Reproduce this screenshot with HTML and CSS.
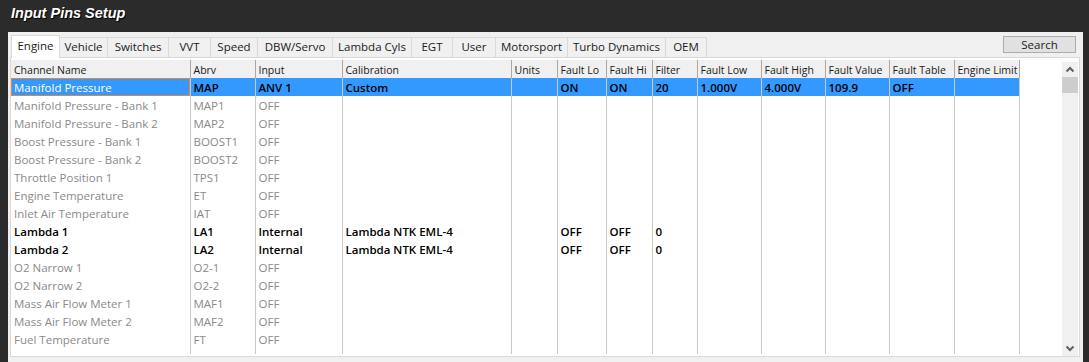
FILE: index.html
```html
<!DOCTYPE html>
<html>
<head>
<meta charset="utf-8">
<title>Input Pins Setup</title>
<link rel="stylesheet" href="styles.css">
</head>
<body>
<div class="window">
  <div class="titlebar"><span class="title">Input Pins Setup</span></div>
  <div class="panel">
    <div class="tabrow">
      <div class="tabs">
        <div class="tab active">Engine</div>
        <div class="tab">Vehicle</div>
        <div class="tab">Switches</div>
        <div class="tab">VVT</div>
        <div class="tab">Speed</div>
        <div class="tab">DBW/Servo</div>
        <div class="tab">Lambda Cyls</div>
        <div class="tab">EGT</div>
        <div class="tab">User</div>
        <div class="tab">Motorsport</div>
        <div class="tab">Turbo Dynamics</div>
        <div class="tab">OEM</div>
      </div>
      <button class="search">Search</button>
    </div>
    <div class="page">
      <div class="grid">
        <table>
          <colgroup>
            <col class="c-name"><col class="c-abrv"><col class="c-input"><col class="c-cal"><col class="c-units"><col class="c-flo"><col class="c-fhi"><col class="c-filter"><col class="c-flow"><col class="c-fhigh"><col class="c-fval"><col class="c-ftab"><col class="c-elim">
          </colgroup>
          <thead>
            <tr><th>Channel Name</th><th>Abrv</th><th>Input</th><th>Calibration</th><th>Units</th><th>Fault Lo</th><th>Fault Hi</th><th>Filter</th><th>Fault Low</th><th>Fault High</th><th>Fault Value</th><th>Fault Table</th><th>Engine Limit</th></tr>
          </thead>
          <tbody>
            <tr class="sel on"><td class="focus">Manifold Pressure</td><td>MAP</td><td>ANV 1</td><td>Custom</td><td></td><td>ON</td><td>ON</td><td>20</td><td>1.000V</td><td>4.000V</td><td>109.9</td><td>OFF</td><td></td></tr>
            <tr class="off"><td>Manifold Pressure - Bank 1</td><td>MAP1</td><td>OFF</td><td></td><td></td><td></td><td></td><td></td><td></td><td></td><td></td><td></td><td></td></tr>
            <tr class="off"><td>Manifold Pressure - Bank 2</td><td>MAP2</td><td>OFF</td><td></td><td></td><td></td><td></td><td></td><td></td><td></td><td></td><td></td><td></td></tr>
            <tr class="off"><td>Boost Pressure - Bank 1</td><td>BOOST1</td><td>OFF</td><td></td><td></td><td></td><td></td><td></td><td></td><td></td><td></td><td></td><td></td></tr>
            <tr class="off"><td>Boost Pressure - Bank 2</td><td>BOOST2</td><td>OFF</td><td></td><td></td><td></td><td></td><td></td><td></td><td></td><td></td><td></td><td></td></tr>
            <tr class="off"><td>Throttle Position 1</td><td>TPS1</td><td>OFF</td><td></td><td></td><td></td><td></td><td></td><td></td><td></td><td></td><td></td><td></td></tr>
            <tr class="off"><td>Engine Temperature</td><td>ET</td><td>OFF</td><td></td><td></td><td></td><td></td><td></td><td></td><td></td><td></td><td></td><td></td></tr>
            <tr class="off"><td>Inlet Air Temperature</td><td>IAT</td><td>OFF</td><td></td><td></td><td></td><td></td><td></td><td></td><td></td><td></td><td></td><td></td></tr>
            <tr class="on"><td>Lambda 1</td><td>LA1</td><td>Internal</td><td>Lambda NTK EML-4</td><td></td><td>OFF</td><td>OFF</td><td>0</td><td></td><td></td><td></td><td></td><td></td></tr>
            <tr class="on"><td>Lambda 2</td><td>LA2</td><td>Internal</td><td>Lambda NTK EML-4</td><td></td><td>OFF</td><td>OFF</td><td>0</td><td></td><td></td><td></td><td></td><td></td></tr>
            <tr class="off"><td>O2 Narrow 1</td><td>O2-1</td><td>OFF</td><td></td><td></td><td></td><td></td><td></td><td></td><td></td><td></td><td></td><td></td></tr>
            <tr class="off"><td>O2 Narrow 2</td><td>O2-2</td><td>OFF</td><td></td><td></td><td></td><td></td><td></td><td></td><td></td><td></td><td></td><td></td></tr>
            <tr class="off"><td>Mass Air Flow Meter 1</td><td>MAF1</td><td>OFF</td><td></td><td></td><td></td><td></td><td></td><td></td><td></td><td></td><td></td><td></td></tr>
            <tr class="off"><td>Mass Air Flow Meter 2</td><td>MAF2</td><td>OFF</td><td></td><td></td><td></td><td></td><td></td><td></td><td></td><td></td><td></td><td></td></tr>
            <tr class="off"><td>Fuel Temperature</td><td>FT</td><td>OFF</td><td></td><td></td><td></td><td></td><td></td><td></td><td></td><td></td><td></td><td></td></tr>
            <tr class="off"><td>Inlet MAP Air Temp</td><td>MAT</td><td>OFF</td><td></td><td></td><td></td><td></td><td></td><td></td><td></td><td></td><td></td><td></td></tr>
          </tbody>
        </table>
      </div>
      <div class="vscroll">
        <svg class="arrow" width="16" height="15" viewBox="0 0 16 15"><path d="M4.5 9.5 L8 6 L11.5 9.5" fill="none" stroke="#606060" stroke-width="2"/></svg>
        <div class="thumb"></div>
        <div class="track"></div>
        <svg class="arrow" width="16" height="15" viewBox="0 0 16 15"><path d="M4.5 5.5 L8 9 L11.5 5.5" fill="none" stroke="#606060" stroke-width="2"/></svg>
      </div>
    </div>
  </div>
</div>
</body>
</html>
```

FILE: styles.css
```css
* { box-sizing: border-box; }
html, body { margin: 0; padding: 0; }
body {
  width: 1089px;
  height: 362px;
  overflow: hidden;
  background: #2b2b2b;
  font-family: "Open Sans", "Noto Sans", "Liberation Sans", sans-serif;
  font-size: 11.5px;
  color: #1a1a1a;
}
.window {
  display: flex;
  flex-direction: column;
  height: 362px;
  background: #2b2b2b;
  padding: 0 6px 0 8px;
}
.titlebar {
  height: 32px;
  padding: 5px 0 0 3px;
}
.title {
  font-family: "Liberation Sans", Arial, sans-serif;
  font-weight: bold;
  font-style: italic;
  font-size: 14.5px;
  color: #ffffff;
  text-shadow: 1px 1px 1px #000;
}
.panel {
  flex: 1;
  background: #f0f0f0;
  display: flex;
  flex-direction: column;
  padding: 0 0 5px 0;
}
.tabrow {
  height: 25px;
  display: flex;
  justify-content: space-between;
  padding-left: 3px;
}
.tabs {
  display: flex;
  align-items: flex-end;
  position: relative;
  z-index: 1;
}
.tab {
  flex: none;
  height: 20px;
  line-height: 18px;
  padding: 0;
  text-align: center;
  border: 1px solid #d9d9d9;
  border-bottom: none;
  border-left: none;
  background: #f0f0f0;
  white-space: nowrap;
  color: #1a1a1a;
}
.tab:nth-child(1) { width: 49px; }
.tab:nth-child(2) { width: 48px; }
.tab:nth-child(3) { width: 61px; }
.tab:nth-child(4) { width: 42px; }
.tab:nth-child(5) { width: 47px; }
.tab:nth-child(6) { width: 75px; }
.tab:nth-child(7) { width: 79px; }
.tab:nth-child(8) { width: 41px; }
.tab:nth-child(9) { width: 43px; }
.tab:nth-child(10) { width: 72px; }
.tab:nth-child(11) { width: 98px; }
.tab:nth-child(12) { width: 41px; }
.tab.active {
  height: 23px;
  line-height: 20px;
  background: #ffffff;
  border-left: 1px solid #d9d9d9;
  margin-bottom: -1px;
}
.search {
  margin: 4px 7px 0 0;
  width: 73px;
  height: 17px;
  padding: 0;
  font-family: inherit;
  font-size: 11.5px;
  line-height: 14px;
  color: #1a1a1a;
  background: #e1e1e1;
  border: 1px solid #adadad;
}
.page {
  height: 300px;
  margin: 0 3px 0 2px;
  border: 1px solid #d9d9d9;
  background: #ffffff;
  display: flex;
  padding-top: 2px;
}
.grid {
  flex: 1;
  height: 294px;
  overflow: hidden;
}
table {
  border-collapse: collapse;
  table-layout: fixed;
  width: 1008px;
}
.c-name { width: 179px; }
.c-abrv { width: 65px; }
.c-input { width: 87px; }
.c-cal { width: 169px; }
.c-units { width: 46px; }
.c-flo { width: 49px; }
.c-fhi { width: 46px; }
.c-filter { width: 45px; }
.c-flow { width: 64px; }
.c-fhigh { width: 64px; }
.c-fval { width: 64px; }
.c-ftab { width: 65px; }
.c-elim { width: 65px; }
th {
  height: 18px;
  padding: 1px 0 0 3px;
  text-align: left;
  font-size: 10.5px;
  font-weight: normal;
  background: #f0f0f0;
  border-right: 1px solid #a8a8a8;
  color: #1a1a1a;
  white-space: nowrap;
  overflow: hidden;
}
td {
  height: 18px;
  padding: 1px 0 0 3px;
  border-right: 1px solid #c8c8c8;
  white-space: nowrap;
  overflow: hidden;
}
tr.off td { color: #8a8a8a; }
tr.on td { color: #000000; font-weight: 600; }
tr.sel td { background: #3399ff; }
tr.sel td.focus {
  color: #ffffff;
  font-weight: normal;
  outline: 1px solid #e0873a;
  outline-offset: -1px;
}
.vscroll {
  width: 16px;
  margin: 2px 1px 0 0;
  background: #f0f0f0;
  display: flex;
  flex-direction: column;
}
.arrow { display: block; flex: none; }
.thumb {
  height: 16px;
  background: #cdcdcd;
}
.track { flex: 1; }
```
